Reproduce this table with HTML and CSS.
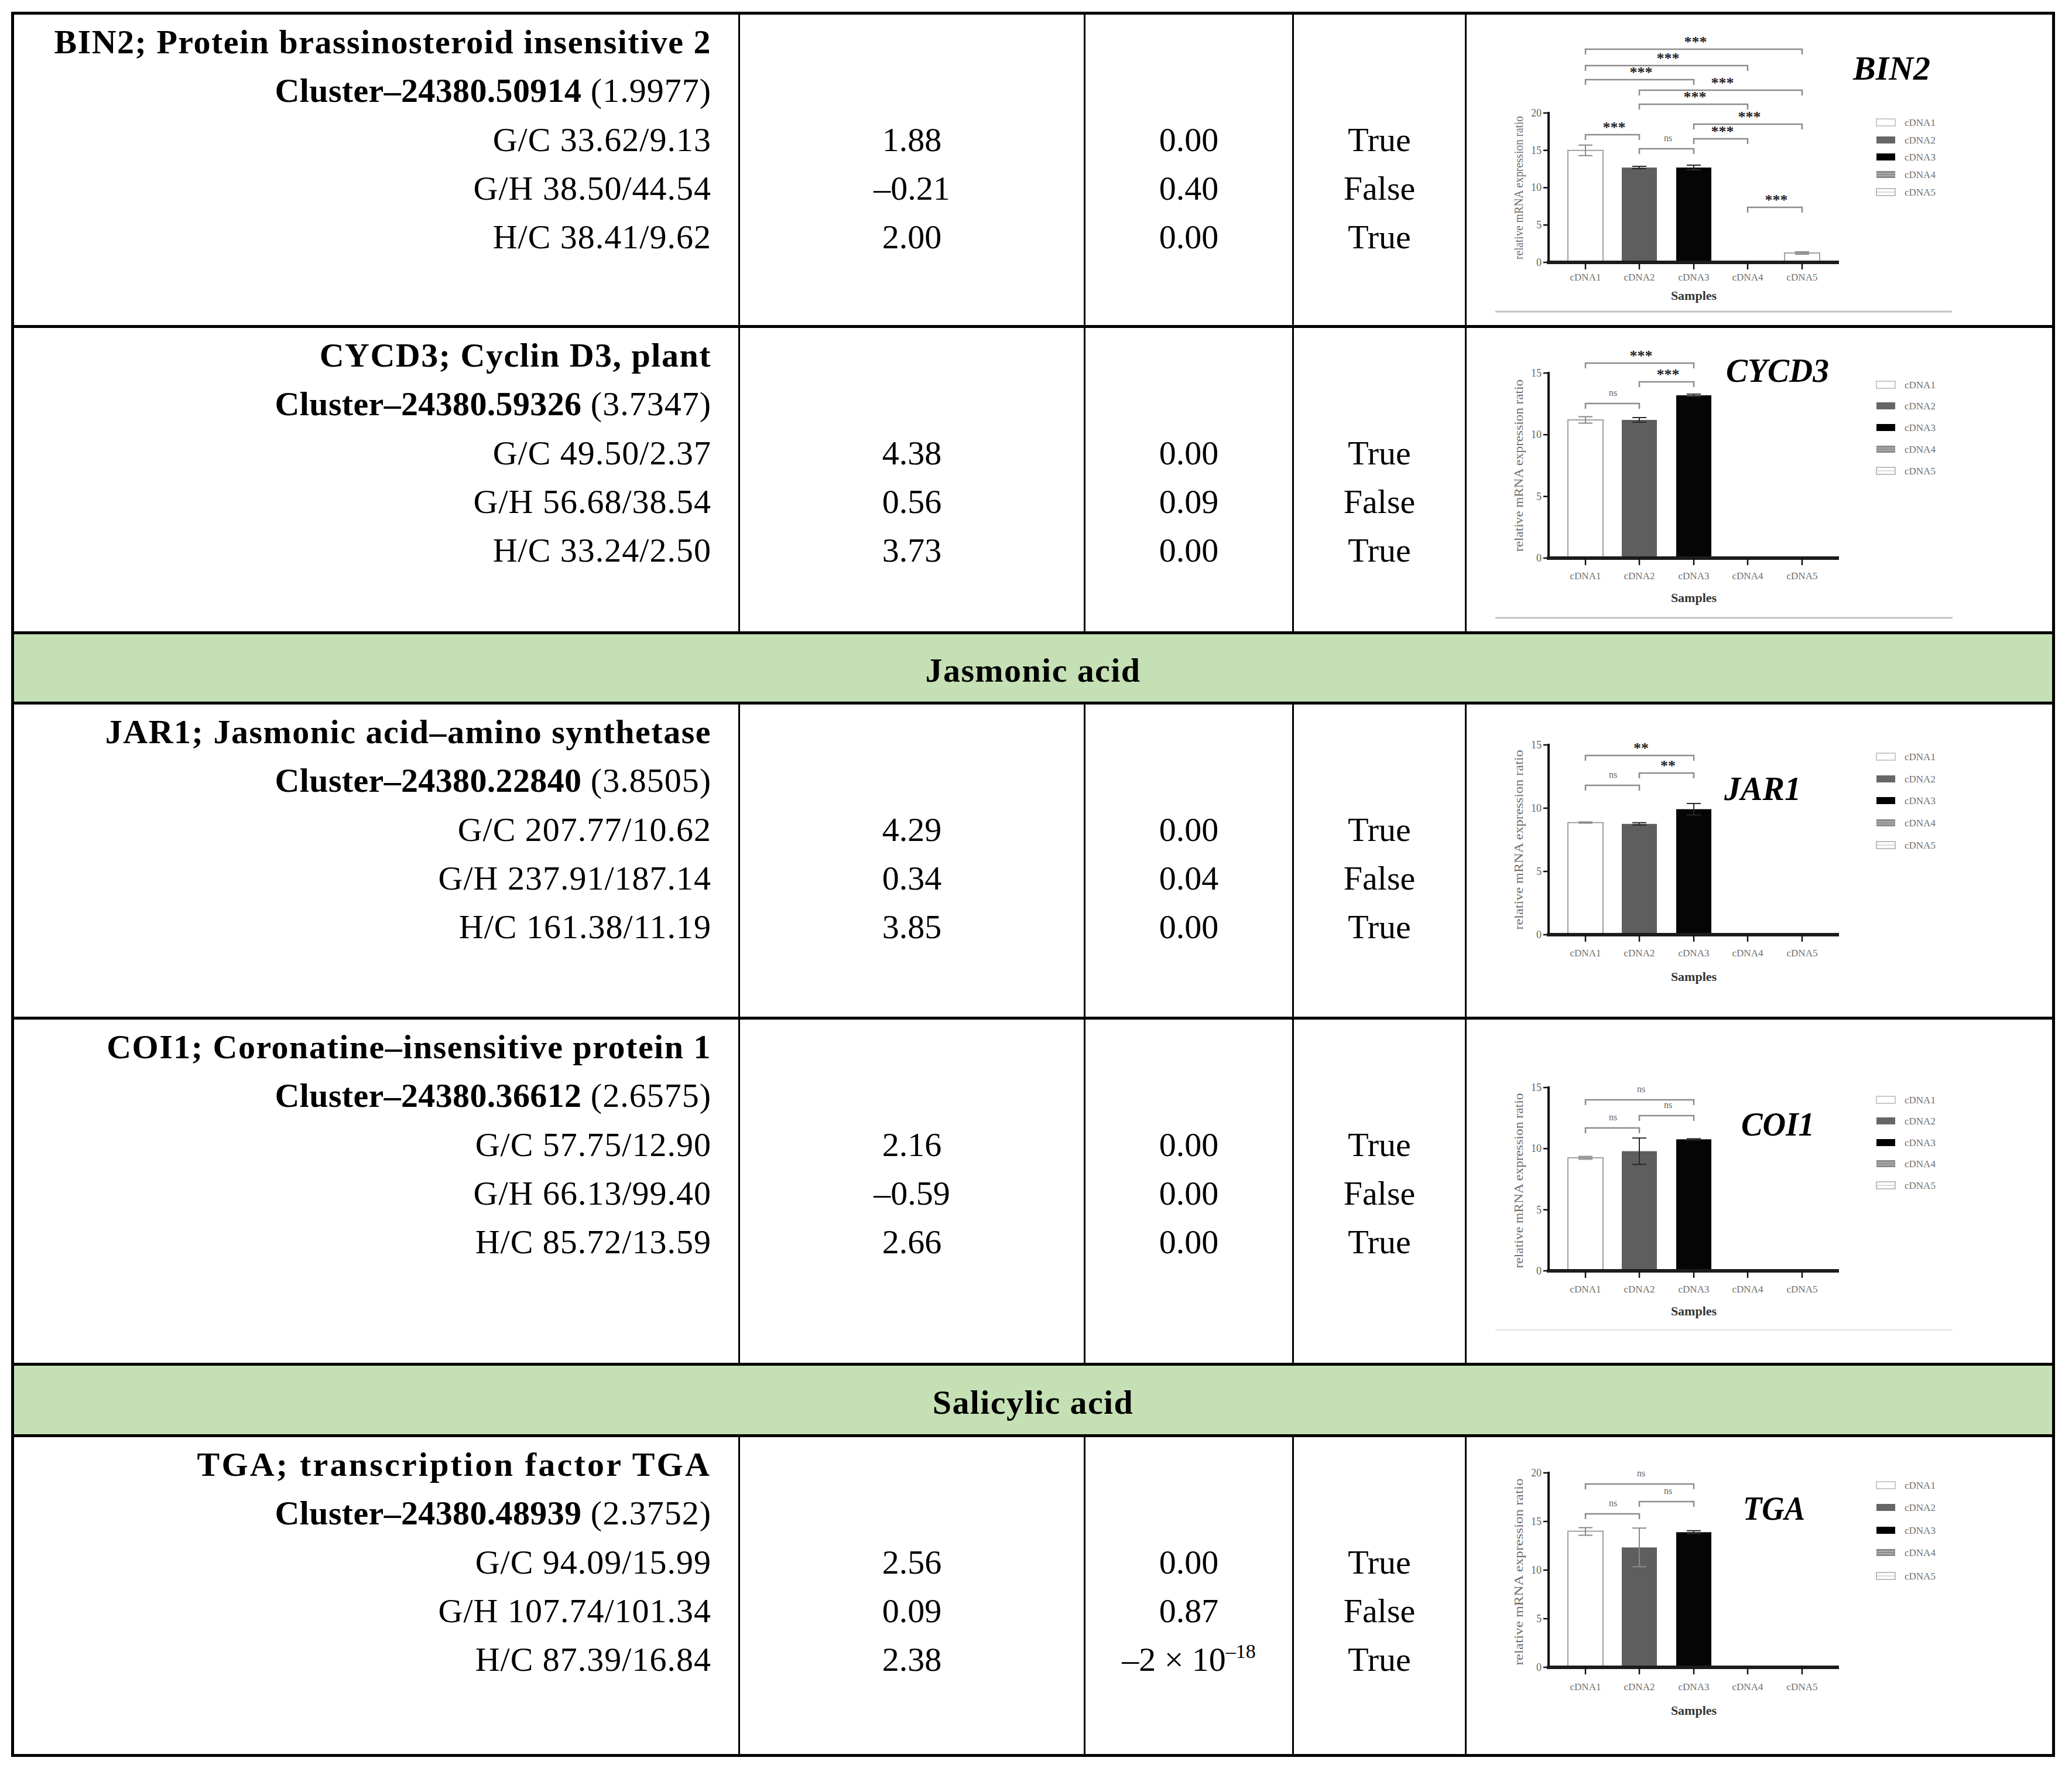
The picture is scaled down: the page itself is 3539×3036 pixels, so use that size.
FILE: index.html
```html
<!DOCTYPE html>
<html lang="en">
<head>
<meta charset="utf-8">
<title>Gene expression table</title>
<link rel="stylesheet" href="styles.css">
</head>
<body>
<div class="page">
<div class="tbl">

  <!-- BIN2 -->
  <div class="cell name">
    <div class="g">BIN2; Protein brassinosteroid insensitive 2</div>
    <div><b class="c">Cluster–24380.50914</b> (1.9977)</div>
    <div>G/C 33.62/9.13</div>
    <div>G/H 38.50/44.54</div>
    <div>H/C 38.41/9.62</div>
  </div>
  <div class="cell val"><div>1.88</div><div>–0.21</div><div>2.00</div></div>
  <div class="cell val"><div>0.00</div><div>0.40</div><div>0.00</div></div>
  <div class="cell val"><div>True</div><div>False</div><div>True</div></div>
  <div class="cell chart">
    <svg class="plot" width="1000" height="530" viewBox="0 0 1000 530">
      <line class="ax" x1="140" y1="166" x2="140" y2="425"/>
      <path class="tk" d="M131 423H140M131 359.25H140M131 295.5H140M131 231.75H140M131 168H140"/>
      <text class="t-tick" x="128" y="429">0</text>
      <text class="t-tick" x="128" y="365">5</text>
      <text class="t-tick" x="128" y="301">10</text>
      <text class="t-tick" x="128" y="238">15</text>
      <text class="t-tick" x="128" y="174">20</text>
      <text class="t-y" transform="translate(96 295.5) rotate(-90)" textLength="245" lengthAdjust="spacingAndGlyphs">relative mRNA expression ratio</text>
      <rect class="b1" x="173" y="231.75" width="60" height="191.25"/>
      <rect class="b2" x="265" y="261.1" width="60" height="161.9"/>
      <rect class="b3" x="358" y="261.1" width="60" height="161.9"/>
      <rect class="b1" x="543" y="407" width="60" height="16"/>
      <path class="er" d="M203 222.75V240.75M191 222.75H215M191 240.75H215"/>
      <path class="er dk" d="M295 259V263M283 259H307M283 263H307"/>
      <path class="er dk" d="M388 257V265M376 257H400M376 265H400"/>
      <path class="er" d="M573 405V409M561 405H585M561 409H585"/>
      <line class="xax" x1="137" y1="423" x2="636" y2="423"/>
      <path class="tk" d="M203 423v12M295 423v12M388 423v12M480 423v12M573 423v12"/>
      <text class="t-x" x="203" y="454">cDNA1</text>
      <text class="t-x" x="295" y="454">cDNA2</text>
      <text class="t-x" x="388" y="454">cDNA3</text>
      <text class="t-x" x="480" y="454">cDNA4</text>
      <text class="t-x" x="573" y="454">cDNA5</text>
      <text class="t-s" x="388" y="487">Samples</text>
      <path class="br" d="M203 68V59H573V68"/><text class="t-sig" x="391" y="55">***</text>
      <path class="br" d="M203 96V87H480V96"/><text class="t-sig" x="344" y="83">***</text>
      <path class="br" d="M203 120V111H388V120"/><text class="t-sig" x="298" y="107">***</text>
      <path class="br" d="M295 138V129H573V138"/><text class="t-sig" x="437" y="125">***</text>
      <path class="br" d="M295 162V153H480V162"/><text class="t-sig" x="390" y="149">***</text>
      <path class="br" d="M388 196V187H573V196"/><text class="t-sig" x="483" y="183">***</text>
      <path class="br" d="M203 214V205H295V214"/><text class="t-sig" x="252" y="201">***</text>
      <path class="br" d="M388 221V212H480V221"/><text class="t-sig" x="437" y="208">***</text>
      <path class="br" d="M295 238V229H388V238"/><text class="t-ns" x="344" y="216">ns</text>
      <path class="br" d="M480 338V329H573V338"/><text class="t-sig" x="529" y="325">***</text>
      <text class="t-ttl" x="660" y="111" textLength="132" lengthAdjust="spacingAndGlyphs">BIN2</text>
      <rect class="l1" x="700" y="178" width="32" height="12"/><text class="t-lg" x="748" y="190">cDNA1</text>
      <rect class="l2" x="700" y="208" width="32" height="12"/><text class="t-lg" x="748" y="220">cDNA2</text>
      <rect class="l3" x="700" y="237" width="32" height="12"/><text class="t-lg" x="748" y="249">cDNA3</text>
      <rect class="l4" x="700" y="267" width="32" height="12"/><path class="l4s" d="M701 271H731M701 275H731"/><text class="t-lg" x="748" y="279">cDNA4</text>
      <rect class="l5" x="700" y="297" width="32" height="12"/><path class="l5s" d="M701 303H731"/><text class="t-lg" x="748" y="309">cDNA5</text>
      <line class="gl" x1="49" y1="507" x2="829" y2="507"/>
    </svg>
  </div>

  <!-- CYCD3 -->
  <div class="cell name">
    <div class="g">CYCD3; Cyclin D3, plant</div>
    <div><b class="c">Cluster–24380.59326</b> (3.7347)</div>
    <div>G/C 49.50/2.37</div>
    <div>G/H 56.68/38.54</div>
    <div>H/C 33.24/2.50</div>
  </div>
  <div class="cell val"><div>4.38</div><div>0.56</div><div>3.73</div></div>
  <div class="cell val"><div>0.00</div><div>0.09</div><div>0.00</div></div>
  <div class="cell val"><div>True</div><div>False</div><div>True</div></div>
  <div class="cell chart">
    <svg class="plot" width="1000" height="518" viewBox="0 0 1000 518">
      <line class="ax" x1="140" y1="75" x2="140" y2="395"/>
      <path class="tk" d="M131 393H140M131 287.7H140M131 182.3H140M131 77H140"/>
      <text class="t-tick" x="128" y="399">0</text>
      <text class="t-tick" x="128" y="294">5</text>
      <text class="t-tick" x="128" y="188">10</text>
      <text class="t-tick" x="128" y="83">15</text>
      <text class="t-y" transform="translate(96 235) rotate(-90)" textLength="294" lengthAdjust="spacingAndGlyphs">relative mRNA expression ratio</text>
      <rect class="b1" x="173" y="157" width="60" height="236"/>
      <rect class="b2" x="265" y="157" width="60" height="236"/>
      <rect class="b3" x="358" y="115" width="60" height="278"/>
      <path class="er" d="M203 151.5V162.5M191 151.5H215M191 162.5H215"/>
      <path class="er dk" d="M295 153V161M283 153H307M283 161H307"/>
      <path class="er dk" d="M388 113V117M376 113H400M376 117H400"/>
      <line class="xax" x1="137" y1="393" x2="636" y2="393"/>
      <path class="tk" d="M203 393v12M295 393v12M388 393v12M480 393v12M573 393v12"/>
      <text class="t-x" x="203" y="429">cDNA1</text>
      <text class="t-x" x="295" y="429">cDNA2</text>
      <text class="t-x" x="388" y="429">cDNA3</text>
      <text class="t-x" x="480" y="429">cDNA4</text>
      <text class="t-x" x="573" y="429">cDNA5</text>
      <text class="t-s" x="388" y="468">Samples</text>
      <path class="br" d="M203 138V129H295V138"/><text class="t-ns" x="250" y="116">ns</text>
      <path class="br" d="M295 101V92H388V101"/><text class="t-sig" x="344" y="88">***</text>
      <path class="br" d="M203 69V60H388V69"/><text class="t-sig" x="298" y="56">***</text>
      <text class="t-ttl" x="443" y="92" textLength="176" lengthAdjust="spacingAndGlyphs">CYCD3</text>
      <rect class="l1" x="700" y="91" width="32" height="12"/><text class="t-lg" x="748" y="103">cDNA1</text>
      <rect class="l2" x="700" y="127" width="32" height="12"/><text class="t-lg" x="748" y="139">cDNA2</text>
      <rect class="l3" x="700" y="164" width="32" height="12"/><text class="t-lg" x="748" y="176">cDNA3</text>
      <rect class="l4" x="700" y="201" width="32" height="12"/><path class="l4s" d="M701 205H731M701 209H731"/><text class="t-lg" x="748" y="213">cDNA4</text>
      <rect class="l5" x="700" y="238" width="32" height="12"/><path class="l5s" d="M701 244H731"/><text class="t-lg" x="748" y="250">cDNA5</text>
      <line class="gl" x1="49" y1="495" x2="830" y2="495"/>
    </svg>
  </div>

  <div class="cell sect sect-a">Jasmonic acid</div>

  <!-- JAR1 -->
  <div class="cell name">
    <div class="g">JAR1; Jasmonic acid–amino synthetase</div>
    <div><b class="c">Cluster–24380.22840</b> (3.8505)</div>
    <div>G/C 207.77/10.62</div>
    <div>G/H 237.91/187.14</div>
    <div>H/C 161.38/11.19</div>
  </div>
  <div class="cell val"><div>4.29</div><div>0.34</div><div>3.85</div></div>
  <div class="cell val"><div>0.00</div><div>0.04</div><div>0.00</div></div>
  <div class="cell val"><div>True</div><div>False</div><div>True</div></div>
  <div class="cell chart">
    <svg class="plot" width="1000" height="533" viewBox="0 0 1000 533">
      <line class="ax" x1="140" y1="67" x2="140" y2="395"/>
      <path class="tk" d="M131 393H140M131 285H140M131 177H140M131 69H140"/>
      <text class="t-tick" x="128" y="399">0</text>
      <text class="t-tick" x="128" y="291">5</text>
      <text class="t-tick" x="128" y="183">10</text>
      <text class="t-tick" x="128" y="75">15</text>
      <text class="t-y" transform="translate(96 231) rotate(-90)" textLength="307" lengthAdjust="spacingAndGlyphs">relative mRNA expression ratio</text>
      <rect class="b1" x="173" y="201.6" width="60" height="191.4"/>
      <rect class="b2" x="265" y="203.8" width="60" height="189.2"/>
      <rect class="b3" x="358" y="178.7" width="60" height="214.3"/>
      <path class="er" d="M203 200.6V202.6M191 200.6H215M191 202.6H215"/>
      <path class="er dk" d="M295 201.8V205.8M283 201.8H307M283 205.8H307"/>
      <path class="er dk" d="M388 169V188.4M376 169H400M376 188.4H400"/>
      <line class="xax" x1="137" y1="393" x2="636" y2="393"/>
      <path class="tk" d="M203 393v12M295 393v12M388 393v12M480 393v12M573 393v12"/>
      <text class="t-x" x="203" y="430">cDNA1</text>
      <text class="t-x" x="295" y="430">cDNA2</text>
      <text class="t-x" x="388" y="430">cDNA3</text>
      <text class="t-x" x="480" y="430">cDNA4</text>
      <text class="t-x" x="573" y="430">cDNA5</text>
      <text class="t-s" x="388" y="472">Samples</text>
      <path class="br" d="M203 147V138H295V147"/><text class="t-ns" x="250" y="125">ns</text>
      <path class="br" d="M295 126V117H388V126"/><text class="t-sig" x="344" y="113">**</text>
      <path class="br" d="M203 96V87H388V96"/><text class="t-sig" x="298" y="83">**</text>
      <text class="t-ttl" x="440" y="163" textLength="131" lengthAdjust="spacingAndGlyphs">JAR1</text>
      <rect class="l1" x="700" y="83" width="32" height="12"/><text class="t-lg" x="748" y="95">cDNA1</text>
      <rect class="l2" x="700" y="121" width="32" height="12"/><text class="t-lg" x="748" y="133">cDNA2</text>
      <rect class="l3" x="700" y="158" width="32" height="12"/><text class="t-lg" x="748" y="170">cDNA3</text>
      <rect class="l4" x="700" y="196" width="32" height="12"/><path class="l4s" d="M701 200H731M701 204H731"/><text class="t-lg" x="748" y="208">cDNA4</text>
      <rect class="l5" x="700" y="234" width="32" height="12"/><path class="l5s" d="M701 240H731"/><text class="t-lg" x="748" y="246">cDNA5</text>
    </svg>
  </div>

  <!-- COI1 -->
  <div class="cell name">
    <div class="g">COI1; Coronatine–insensitive protein 1</div>
    <div><b class="c">Cluster–24380.36612</b> (2.6575)</div>
    <div>G/C 57.75/12.90</div>
    <div>G/H 66.13/99.40</div>
    <div>H/C 85.72/13.59</div>
  </div>
  <div class="cell val"><div>2.16</div><div>–0.59</div><div>2.66</div></div>
  <div class="cell val"><div>0.00</div><div>0.00</div><div>0.00</div></div>
  <div class="cell val"><div>True</div><div>False</div><div>True</div></div>
  <div class="cell chart">
    <svg class="plot" width="1000" height="586" viewBox="0 0 1000 586">
      <line class="ax" x1="140" y1="114" x2="140" y2="431"/>
      <path class="tk" d="M131 429H140M131 324.7H140M131 220.3H140M131 116H140"/>
      <text class="t-tick" x="128" y="435">0</text>
      <text class="t-tick" x="128" y="331">5</text>
      <text class="t-tick" x="128" y="226">10</text>
      <text class="t-tick" x="128" y="122">15</text>
      <text class="t-y" transform="translate(96 275) rotate(-90)" textLength="299" lengthAdjust="spacingAndGlyphs">relative mRNA expression ratio</text>
      <rect class="b1" x="173" y="236" width="60" height="193"/>
      <rect class="b2" x="265" y="224.7" width="60" height="204.3"/>
      <rect class="b3" x="358" y="204.4" width="60" height="224.6"/>
      <path class="er thick" d="M191 236H215"/>
      <path class="er dk" d="M295 202.2V247.2M283 202.2H307M283 247.2H307"/>
      <path class="er dk" d="M388 203.4V205.4M376 203.4H400M376 205.4H400"/>
      <line class="xax" x1="137" y1="429" x2="636" y2="429"/>
      <path class="tk" d="M203 429v12M295 429v12M388 429v12M480 429v12M573 429v12"/>
      <text class="t-x" x="203" y="466">cDNA1</text>
      <text class="t-x" x="295" y="466">cDNA2</text>
      <text class="t-x" x="388" y="466">cDNA3</text>
      <text class="t-x" x="480" y="466">cDNA4</text>
      <text class="t-x" x="573" y="466">cDNA5</text>
      <text class="t-s" x="388" y="505">Samples</text>
      <path class="br" d="M203 194V185H295V194"/><text class="t-ns" x="250" y="172">ns</text>
      <path class="br" d="M295 173V164H388V173"/><text class="t-ns" x="344" y="151">ns</text>
      <path class="br" d="M203 146V137H388V146"/><text class="t-ns" x="298" y="124">ns</text>
      <text class="t-ttl" x="469" y="198" textLength="125" lengthAdjust="spacingAndGlyphs">COI1</text>
      <rect class="l1" x="700" y="131" width="32" height="12"/><text class="t-lg" x="748" y="143">cDNA1</text>
      <rect class="l2" x="700" y="167" width="32" height="12"/><text class="t-lg" x="748" y="179">cDNA2</text>
      <rect class="l3" x="700" y="204" width="32" height="12"/><text class="t-lg" x="748" y="216">cDNA3</text>
      <rect class="l4" x="700" y="240" width="32" height="12"/><path class="l4s" d="M701 244H731M701 248H731"/><text class="t-lg" x="748" y="252">cDNA4</text>
      <rect class="l5" x="700" y="277" width="32" height="12"/><path class="l5s" d="M701 283H731"/><text class="t-lg" x="748" y="289">cDNA5</text>
      <line class="gl light" x1="49" y1="530" x2="830" y2="530"/>
    </svg>
  </div>

  <div class="cell sect sect-b">Salicylic acid</div>

  <!-- TGA -->
  <div class="cell name last">
    <div class="g g-wide">TGA; transcription factor TGA</div>
    <div><b class="c">Cluster–24380.48939</b> (2.3752)</div>
    <div>G/C 94.09/15.99</div>
    <div>G/H 107.74/101.34</div>
    <div>H/C 87.39/16.84</div>
  </div>
  <div class="cell val last"><div>2.56</div><div>0.09</div><div>2.38</div></div>
  <div class="cell val last"><div>0.00</div><div>0.87</div><div>–2 × 10<sup class="sup">–18</sup></div></div>
  <div class="cell val last"><div>True</div><div>False</div><div>True</div></div>
  <div class="cell chart last">
    <svg class="plot" width="1000" height="541" viewBox="0 0 1000 541">
      <line class="ax" x1="140" y1="59" x2="140" y2="395"/>
      <path class="tk" d="M131 393H140M131 310H140M131 227H140M131 144H140M131 61H140"/>
      <text class="t-tick" x="128" y="399">0</text>
      <text class="t-tick" x="128" y="316">5</text>
      <text class="t-tick" x="128" y="233">10</text>
      <text class="t-tick" x="128" y="150">15</text>
      <text class="t-tick" x="128" y="67">20</text>
      <text class="t-y" transform="translate(96 230) rotate(-90)" textLength="319" lengthAdjust="spacingAndGlyphs">relative mRNA expression ratio</text>
      <rect class="b1" x="173" y="160.6" width="60" height="232.4"/>
      <rect class="b2" x="265" y="188.3" width="60" height="204.7"/>
      <rect class="b3" x="358" y="162.3" width="60" height="230.7"/>
      <path class="er" d="M203 154.6V167.6M191 154.6H215M191 167.6H215"/>
      <path class="er" d="M295 155.3V221.3M283 155.3H307M283 221.3H307"/>
      <path class="er dk" d="M388 159.8V164.8M376 159.8H400M376 164.8H400"/>
      <line class="xax" x1="137" y1="393" x2="636" y2="393"/>
      <path class="tk" d="M203 393v12M295 393v12M388 393v12M480 393v12M573 393v12"/>
      <text class="t-x" x="203" y="432">cDNA1</text>
      <text class="t-x" x="295" y="432">cDNA2</text>
      <text class="t-x" x="388" y="432">cDNA3</text>
      <text class="t-x" x="480" y="432">cDNA4</text>
      <text class="t-x" x="573" y="432">cDNA5</text>
      <text class="t-s" x="388" y="474">Samples</text>
      <path class="br" d="M203 140V131H295V140"/><text class="t-ns" x="250" y="118">ns</text>
      <path class="br" d="M295 119V110H388V119"/><text class="t-ns" x="344" y="97">ns</text>
      <path class="br" d="M203 89V80H388V89"/><text class="t-ns" x="298" y="67">ns</text>
      <text class="t-ttl" x="472" y="141" textLength="106" lengthAdjust="spacingAndGlyphs">TGA</text>
      <rect class="l1" x="700" y="76" width="32" height="12"/><text class="t-lg" x="748" y="88">cDNA1</text>
      <rect class="l2" x="700" y="114" width="32" height="12"/><text class="t-lg" x="748" y="126">cDNA2</text>
      <rect class="l3" x="700" y="153" width="32" height="12"/><text class="t-lg" x="748" y="165">cDNA3</text>
      <rect class="l4" x="700" y="191" width="32" height="12"/><path class="l4s" d="M701 195H731M701 199H731"/><text class="t-lg" x="748" y="203">cDNA4</text>
      <rect class="l5" x="700" y="231" width="32" height="12"/><path class="l5s" d="M701 237H731"/><text class="t-lg" x="748" y="243">cDNA5</text>
    </svg>
  </div>

</div>
</div>
</body>
</html>
```

FILE: styles.css
```css
html, body {
  margin: 0;
  padding: 0;
  background: #ffffff;
}

.page {
  padding: 20px 0 0 19px;
}

.tbl {
  box-sizing: border-box;
  width: 3491px;
  display: grid;
  grid-template-columns: 1240px 590px 356px 295px 1000px;
  border: 5px solid #000;
  font-family: "Liberation Serif", "Times New Roman", serif;
  font-size: 58px;
  line-height: 83.3px;
  color: #000;
}

.cell {
  box-sizing: border-box;
  border-right: 3px solid #000;
  border-bottom: 5px solid #000;
}

.cell.last {
  border-bottom: 0;
}

.name {
  padding: 5px 46px 0 0;
  text-align: right;
  letter-spacing: 1px;
}

.g {
  font-weight: 700;
  letter-spacing: 1.5px;
}

.g-wide {
  letter-spacing: 3.2px;
}

.c {
  font-weight: 700;
  letter-spacing: 0.35px;
}

.val {
  padding-top: 171.6px;
  text-align: center;
}

.sup {
  font-size: 34px;
  line-height: 0;
  vertical-align: 22px;
}

.chart {
  border-right: 0;
}

.plot {
  display: block;
  font-family: "Liberation Serif", "Times New Roman", serif;
}

.sect {
  grid-column: 1 / -1;
  border-right: 0;
  background: #c5e0b4;
  font-weight: 700;
  letter-spacing: 1.4px;
  display: flex;
  align-items: center;
  justify-content: center;
  padding-top: 9px;
}

.sect-a {
  height: 120px;
}

.sect-b {
  height: 122px;
}

/* chart parts */
.ax {
  stroke: #111;
  stroke-width: 4;
}

.xax {
  stroke: #1c1c1c;
  stroke-width: 6;
}

.tk {
  stroke: #111;
  stroke-width: 2.5;
  fill: none;
}

.b1 {
  fill: #fff;
  stroke: #a0a0a0;
  stroke-width: 2;
}

.b2 {
  fill: #5e5e5e;
}

.b3 {
  fill: #050505;
}

.er {
  stroke: #8a8a8a;
  stroke-width: 2;
  fill: none;
}

.er.dk {
  stroke: #2a2a2a;
}

.er.thick {
  stroke: #9a9a9a;
  stroke-width: 7;
}

.br {
  stroke: #8c8c8c;
  stroke-width: 2.5;
  fill: none;
}

.gl {
  stroke: #c2c2c2;
  stroke-width: 3;
}

.gl.light {
  stroke: #e8e8e8;
}

.l1 {
  fill: #fff;
  stroke: #b8b8b8;
  stroke-width: 1.5;
}

.l2 {
  fill: #666;
}

.l3 {
  fill: #000;
}

.l4 {
  fill: #8a8a8a;
}

.l4s {
  stroke: #d0d0d0;
  stroke-width: 1;
}

.l5 {
  fill: #fff;
  stroke: #a8a8a8;
  stroke-width: 1.5;
}

.l5s {
  stroke: #b8b8b8;
  stroke-width: 1;
}

.t-tick {
  font-size: 18px;
  fill: #666;
  text-anchor: end;
}

.t-x {
  font-size: 17px;
  fill: #707070;
  text-anchor: middle;
}

.t-s {
  font-size: 22px;
  font-weight: 700;
  fill: #333;
  text-anchor: middle;
}

.t-y {
  font-size: 22px;
  fill: #6e6e6e;
  text-anchor: middle;
}

.t-sig {
  font-size: 26px;
  font-weight: 700;
  fill: #222;
  text-anchor: middle;
}

.t-ns {
  font-size: 16px;
  fill: #666;
  text-anchor: middle;
}

.t-lg {
  font-size: 17px;
  fill: #707070;
}

.t-ttl {
  font-size: 58px;
  font-weight: 700;
  font-style: italic;
  fill: #000;
}
```
